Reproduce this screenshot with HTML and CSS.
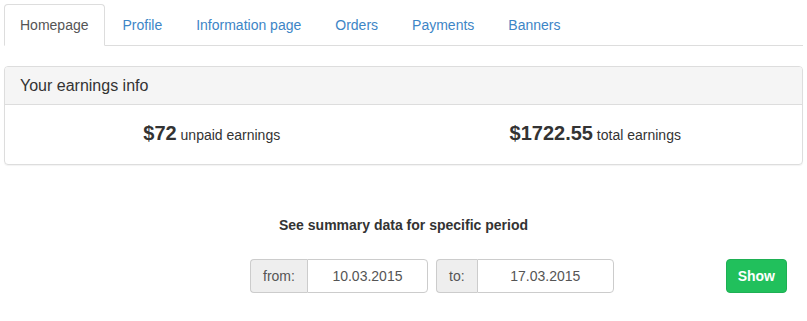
FILE: index.html
```html
<!DOCTYPE html>
<html lang="en">
<head>
<meta charset="UTF-8">
<meta name="viewport" content="width=device-width, initial-scale=1.0">
<link rel="stylesheet" href="styles.css">
</head>
<body>
<div class="page">
	<ul class="tabs">
		<li class="tab active"><a href="#">Homepage</a></li>
		<li class="tab"><a href="#">Profile</a></li>
		<li class="tab"><a href="#">Information page</a></li>
		<li class="tab"><a href="#">Orders</a></li>
		<li class="tab"><a href="#">Payments</a></li>
		<li class="tab"><a href="#">Banners</a></li>
	</ul>

	<div class="panel">
		<div class="panel-heading">
			<h3 class="panel-title">Your earnings info</h3>
		</div>
		<div class="panel-body">
			<div class="earning"><strong class="amount">$72</strong> unpaid earnings</div>
			<div class="earning"><strong class="amount">$1722.55</strong> total earnings</div>
		</div>
	</div>

	<h4 class="summary-title">See summary data for specific period</h4>

	<form class="period-form">
		<div class="input-group">
			<span class="addon">from:</span>
			<input class="input-field" type="text" value="10.03.2015">
		</div>
		<div class="input-group">
			<span class="addon">to:</span>
			<input class="input-field" type="text" value="17.03.2015">
		</div>
		<button class="show-btn" type="button">Show</button>
	</form>
</div>
</body>
</html>
```

FILE: styles.css
```css
body {
	font-family: "Liberation Sans", Arial, sans-serif;
	font-size: 14px;
	line-height: 20px;
	color: #333;
	background-color: #fff;
	margin: 0;
	padding: 0;
}

.page {
	padding: 4px 4px 0 4px;
}

.tabs {
	display: flex;
	list-style: none;
	margin: 0;
	padding: 0;
	border-bottom: 1px solid #ddd;
}

.tab {
	margin-bottom: -1px;
}

.tab a {
	display: block;
	padding: 10px 15px;
	margin-right: 2px;
	line-height: 20px;
	border: 1px solid transparent;
	border-radius: 4px 4px 0 0;
	color: #3d85c6;
	text-decoration: none;
}

.tab.active a {
	color: #555;
	background-color: #fff;
	border-color: #ddd;
	border-bottom-color: transparent;
}

.panel {
	margin-top: 20px;
	border: 1px solid #ddd;
	border-radius: 4px;
	box-shadow: 0 1px 1px rgba(0, 0, 0, 0.05);
}

.panel-heading {
	padding: 10px 15px;
	background-color: #f5f5f5;
	border-bottom: 1px solid #ddd;
	border-radius: 3px 3px 0 0;
}

.panel-title {
	margin: 0;
	font-size: 16px;
	line-height: 17px;
	font-weight: normal;
	color: #333;
}

.panel-body {
	display: flex;
	padding: 15px;
}

.earning {
	flex: 1;
	text-align: center;
	line-height: 27px;
}

.amount {
	font-size: 20px;
}

.summary-title {
	margin: 50px 0 24px;
	text-align: center;
	font-size: 14px;
	line-height: 20px;
	font-weight: bold;
}

.period-form {
	display: flex;
	align-items: center;
	margin: 0 16px 0 246px;
}

.input-group {
	display: flex;
	width: 178px;
	margin-right: 8px;
}

.addon {
	padding: 6px 12px;
	background-color: #eee;
	border: 1px solid #ccc;
	border-right: none;
	border-radius: 4px 0 0 4px;
	color: #555;
}

.input-field {
	flex: 1;
	min-width: 0;
	height: 34px;
	box-sizing: border-box;
	padding: 6px 12px;
	border: 1px solid #ccc;
	border-radius: 0 4px 4px 0;
	font-family: inherit;
	font-size: 14px;
	color: #555;
	text-align: center;
}

.show-btn {
	margin-left: auto;
	height: 34px;
	padding: 6px 11px;
	background-color: #21c05c;
	border: 1px solid #1eb054;
	border-radius: 4px;
	color: #fff;
	font-family: inherit;
	font-size: 14px;
	font-weight: bold;
	cursor: pointer;
}
```
